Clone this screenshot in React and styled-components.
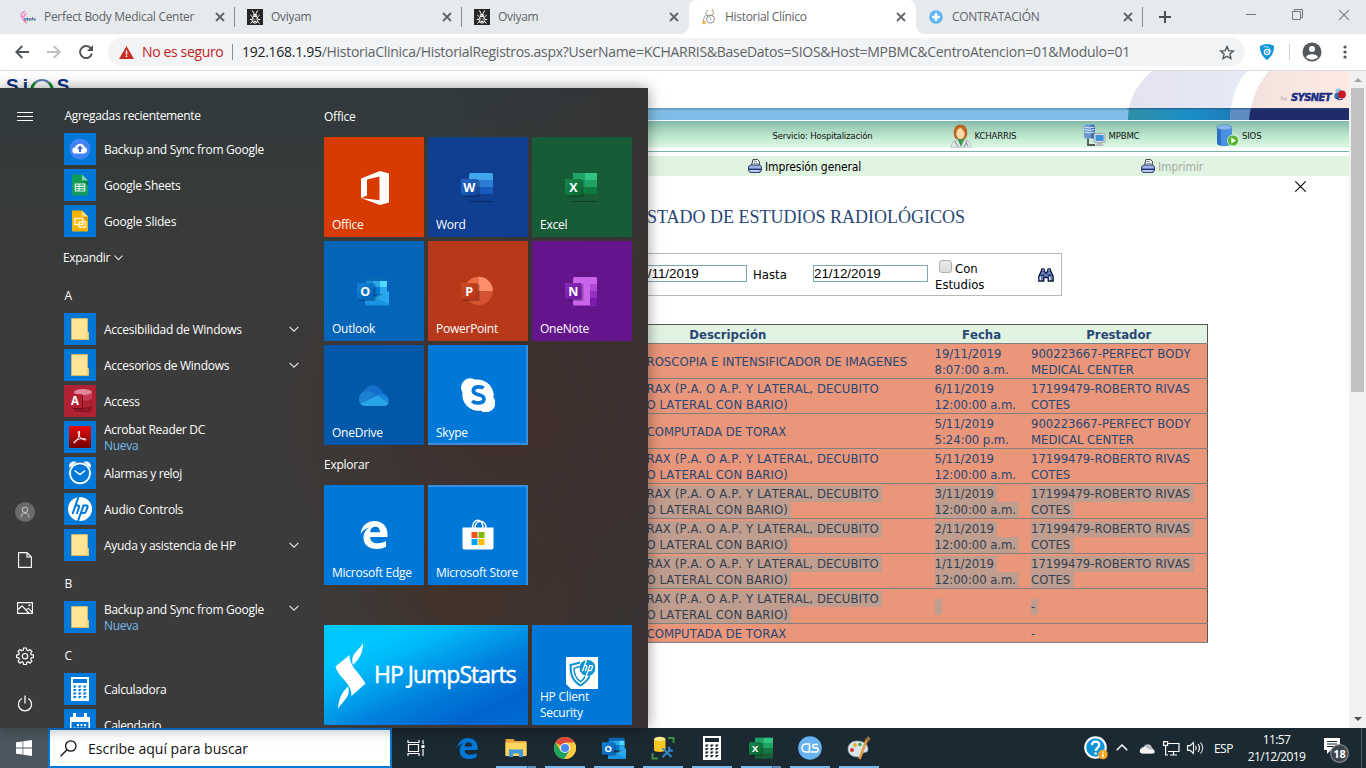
import React from 'react';
import styled, { createGlobalStyle, css } from 'styled-components';

const UI = '"Open Sans", "Noto Sans", sans-serif';
const TAHOMA = '"DejaVu Sans Condensed", "DejaVu Sans", sans-serif';

const GlobalStyle = createGlobalStyle`
  *, *::before, *::after { box-sizing: border-box; }
  body { margin: 0; background: #fff; font-family: ${UI}; }
  svg { display: block; flex: none; }
`;

const Screen = styled.div`
  position: relative;
  display: flex;
  flex-direction: column;
  width: 1366px;
  height: 768px;
  overflow: hidden;
`;

/* ---------- Browser ---------- */

const Browser = styled.div`
  display: flex;
  flex-direction: column;
  height: 728px;
  overflow: hidden;
`;

const TabStrip = styled.div`
  display: flex;
  height: 34px;
  padding-left: 8px;
  background: #e7eaed;
`;

const TabBox = styled.div`
  position: relative;
  display: flex;
  align-items: center;
  width: 227px;
  padding: 0 10px 0 12px;
  font-size: 12px;
  letter-spacing: -0.3px;
  color: #5f6368;
  background: ${(p) => (p.$active ? '#fff' : 'transparent')};
  border-radius: ${(p) => (p.$active ? '8px 8px 0 0' : '0')};
  ${(p) =>
    p.$active &&
    css`
      &::before,
      &::after {
        content: '';
        position: absolute;
        bottom: 0;
        width: 8px;
        height: 8px;
      }
      &::before {
        left: -8px;
        background: radial-gradient(circle at 0 0, transparent 7.5px, #fff 8px);
      }
      &::after {
        right: -8px;
        background: radial-gradient(circle at 100% 0, transparent 7.5px, #fff 8px);
      }
    `}
`;

const TabTitle = styled.span`
  flex: 1;
  margin-left: 8px;
  line-height: 18px;
  white-space: nowrap;
`;

const TabDivider = styled.i`
  width: 1px;
  height: 20px;
  margin-left: 9px;
  margin-right: -10px;
  background: ${(p) => (p.$hidden ? 'transparent' : '#888c90')};
`;

const NewTab = styled.div`
  padding: 11px 0 0 16px;
  flex: 1;
`;

const WindowControls = styled.div`
  display: flex;
  gap: 35px;
  padding: 9px 16px 0 0;
`;

const Toolbar = styled.div`
  display: flex;
  align-items: center;
  height: 37px;
  padding: 0 17px 0 15px;
  border-bottom: 1px solid #d8dadd;
  background: #fff;
`;

const NavButtons = styled.div`
  display: flex;
  align-items: center;
  gap: 18px;
  width: 93px;
`;

const Omnibox = styled.div`
  display: flex;
  align-items: center;
  width: 1137px;
  height: 28px;
  padding: 0 10px 0 11px;
  border-radius: 14px;
  background: #f1f3f4;
  font-size: 14px;
  line-height: 18px;
`;

const NotSecure = styled.span`
  margin-left: 8px;
  width: 90px;
  color: #c5221f;
  letter-spacing: -0.36px;
  white-space: nowrap;
`;

const UrlText = styled.span`
  flex: 1;
  margin-left: 9px;
  color: #5f6368;
  letter-spacing: -0.282px;
  white-space: nowrap;
  b { font-weight: 400; color: #202124; }
`;

const VLine = styled.i`
  width: 1px;
  height: 16px;
  background: ${(p) => p.$color || '#8b8f93'};
`;

const ToolbarActions = styled.div`
  display: flex;
  align-items: center;
  padding-left: 14px;
`;

const Viewport = styled.div`
  display: flex;
  flex: 1;
  min-height: 0;
`;

const Page = styled.div`
  display: flex;
  flex-direction: column;
  width: 1349px;
  overflow: hidden;
  background: #fff;
`;

const Scrollbar = styled.div`
  display: flex;
  flex-direction: column;
  justify-content: space-between;
  align-items: center;
  width: 17px;
  background: #f1f1f1;
`;

const ScrollUp = styled.div`
  display: flex;
  flex-direction: column;
  align-items: center;
  padding-top: 7px;
  gap: 6px;
`;

const Thumb = styled.div`
  width: 13px;
  height: 304px;
  background: #c1c1c1;
`;

const ScrollDown = styled.div`
  padding-bottom: 7px;
`;

/* ---------- Hospital page ---------- */

const Banner = styled.div`
  display: flex;
  justify-content: space-between;
  height: 50px;
  overflow: hidden;
  border-bottom: 1px solid #f4faff;
  background: linear-gradient(#fff 0 37px, #6c9fc4 37px 39px, #7fbde6 39px);
`;

const SiosLogo = styled.div`
  display: flex;
  align-items: flex-start;
  padding: 4px 0 0 6px;
  font: bold 19px/22px "Liberation Sans", sans-serif;
  color: #10307f;
  span { width: 5px; margin-left: 4px; }
`;

const SiosArc = styled.i`
  width: 24px;
  height: 24px;
  margin: 4px 3px 0 2px;
  border: 3px solid #138a36;
  border-top: 2px solid #5c78b8;
  border-radius: 50%;
`;

const BannerArt = styled.div`
  position: relative;
  width: 222px;
`;

const SysnetMark = styled.div`
  position: absolute;
  top: 16px;
  right: 3px;
  display: flex;
  align-items: center;
  font: italic bold 10px/20px "DejaVu Sans", sans-serif;
  color: #1a2f86;
  small { font: 5px/20px "DejaVu Sans", sans-serif; color: #999; margin-right: 3px; }
  svg { margin-left: 3px; margin-top: -6px; }
  span { letter-spacing: -0.6px; -webkit-text-stroke: 0.5px #1a2f86; padding-top: 1px; }
`;

const SessionBar = styled.div`
  display: flex;
  align-items: center;
  height: 31px;
  border-bottom: 1px solid #79b5a6;
  background: linear-gradient(#83b8a9 0, #a9d6c0 9px, #c5ecd3 18px, #dcf7e2 26px, #fff 27px);
  font: 9.5px/14px ${TAHOMA};
  letter-spacing: -0.17px;
  color: #111;
`;

const SessionItem = styled.div`
  display: flex;
  align-items: center;
  flex: none;
  width: ${(p) => p.$w}px;
  margin-left: ${(p) => p.$ml || 0}px;
  padding-bottom: 1px;
  gap: 3px;
  white-space: nowrap;
`;

const PrintBar = styled.div`
  display: flex;
  align-items: center;
  height: 20px;
  margin-top: 4px;
  padding-left: 748px;
  background: #e1f3e1;
  font: 12px/16px ${TAHOMA};
  letter-spacing: -0.1px;
`;

const PrintAction = styled.div`
  display: flex;
  align-items: center;
  flex: none;
  gap: 3px;
  width: 393px;
  color: ${(p) => (p.$disabled ? '#a5aca5' : '#000')};
  span { padding-top: 2px; }
`;

const CloseRow = styled.div`
  display: flex;
  justify-content: flex-end;
  padding: 4px 42px 0 0;
  height: 31px;
`;

const Title = styled.h1`
  margin: 0;
  padding-left: 647px;
  font: 18px/20px "Liberation Serif", serif;
  color: #284775;
  white-space: nowrap;
`;

const FilterBox = styled.div`
  display: flex;
  width: 463px;
  height: 43px;
  margin: 26px 0 0 599px;
  padding-left: 32px;
  border: 1px solid #b9b9b9;
  font: 13px/16px ${TAHOMA};
  color: #000;
`;

const DateInput = styled.input`
  flex: none;
  width: 115px;
  height: 17px;
  margin-top: 11px;
  padding: 0;
  border: 1px solid #7aa9ad;
  border-radius: 0;
  outline: 0;
  font: 13.33px "Liberation Sans", sans-serif;
  color: #000;
`;

const FilterLabel = styled.span`
  flex: none;
  width: 60px;
  margin: 13px 0 0 6px;
`;

const StudiesCheck = styled.label`
  flex: none;
  width: 110px;
  padding: 6px 0 0 7px;
`;

const CheckSquare = styled.i`
  display: inline-block;
  width: 13px;
  height: 13px;
  margin: 0 3px 0 4px;
  vertical-align: 0px;
  border: 1px solid #b0b0b0;
  border-radius: 3px;
  background: linear-gradient(#e9e9e9, #dcdcdc);
`;

const StudyTable = styled.table`
  width: 686px;
  margin: 28px 0 0 522px;
  border-collapse: collapse;
  table-layout: fixed;
  border: 1px solid #555;
  font: 13px/16px ${TAHOMA};
  font-kerning: none;
  color: #284775;
`;

const HeadCell = styled.th`
  width: ${(p) => p.$w}px;
  height: 19px;
  padding: 2px 0 0 ${(p) => p.$pl || 0}px;
  background: #e1f3e1;
  border-bottom: 1px solid #808080;
  font-size: 13px;
`;

const Row = styled.tr`
  height: ${(p) => (p.$short ? 19 : 35)}px;
  background: #e9967a;
  color: ${(p) => (p.$selected ? '#343f50' : '#284775')};
`;

const Cell = styled.td`
  padding: 2px 0 0 ${(p) => p.$pl || 3}px;
  border-bottom: 1px solid #808080;
  letter-spacing: ${(p) => p.$ls || 0}px;
  white-space: nowrap;
`;

const Line = styled.span`
  display: block;
  width: fit-content;
  height: 16px;
  min-width: ${(p) => (p.$selected ? 7 : 0)}px;
  padding-right: ${(p) => p.$tail}px;
  background: ${(p) => (p.$selected ? '#bf9d8f' : 'transparent')};
`;

/* ---------- Start menu ---------- */

const StartMenu = styled.div`
  position: absolute;
  left: 0;
  top: 88px;
  display: flex;
  width: 648px;
  height: 640px;
  overflow: hidden;
  color: #fff;
  font-size: 12px;
  background:
    radial-gradient(ellipse 260px 230px at 500px 330px, rgba(66, 44, 40, 0.75), rgba(66, 44, 40, 0) 100%),
    radial-gradient(ellipse 160px 120px at 460px 510px, rgba(72, 46, 32, 0.6), rgba(72, 46, 32, 0) 100%),
    linear-gradient(100deg, rgba(60, 60, 60, 0) 60%, rgba(56, 46, 46, 0.8) 100%),
    linear-gradient(#30393c 0, #363a39 80px, #3a3b3a 200px, #3b3b3b 640px);
`;

const MenuShadow = styled.div`
  position: absolute;
  left: 0;
  top: 88px;
  width: 648px;
  height: 640px;
  box-shadow: 0 0 14px rgba(0, 0, 0, 0.4);
`;

const Rail = styled.div`
  display: flex;
  flex-direction: column;
  justify-content: space-between;
  width: 48px;
  padding: 24px 0 16px 17px;
`;

const RailGroup = styled.div`
  display: flex;
  flex-direction: column;
  align-items: center;
  gap: 32px;
  width: 20px;
  margin-left: -2px;
`;

const UserBadge = styled.span`
  display: flex;
  align-items: center;
  justify-content: center;
  flex: none;
  width: 20px;
  height: 20px;
  margin-bottom: -2px;
  border-radius: 50%;
  background: #6a6a6a;
`;

const RailIcon = styled.span`
  display: flex;
  align-items: center;
  justify-content: center;
  flex: none;
  width: 18px;
  height: 16px;
`;

const AppList = styled.div`
  display: flex;
  flex-direction: column;
  width: 276px;
  padding: 7px 0 0 16px;
`;

const ListHeader = styled.div`
  display: flex;
  align-items: center;
  gap: 4px;
  flex: none;
  height: 36px;
  margin-left: ${(p) => (p.$expand ? -1 : 0.5)}px;
  padding-top: ${(p) => (p.$expand ? 2 : 6)}px;
  line-height: 16px;
  letter-spacing: -0.32px;
`;

const AppRow = styled.div`
  display: flex;
  align-items: center;
  flex: none;
  height: 36px;
`;

const AppIcon = styled.span`
  display: flex;
  align-items: center;
  justify-content: center;
  width: 32px;
  height: 32px;
  background: ${(p) => p.$bg || '#0078d7'};
`;

const AppName = styled.span`
  display: flex;
  flex-direction: column;
  width: 185px;
  margin-left: 8px;
  padding-top: 2px;
  line-height: 16px;
  letter-spacing: ${(p) => p.$ls || -0.28}px;
  white-space: nowrap;
  small { font-size: 12px; color: #76b9ed; }
`;

const MoreMark = styled.span`
  align-self: ${(p) => (p.$top ? 'flex-start' : 'center')};
  padding-top: ${(p) => (p.$top ? 6 : 0)}px;
`;

const Tiles = styled.div`
  display: flex;
  flex-direction: column;
  width: 308px;
`;

const GroupName = styled.div`
  height: 40px;
  margin-top: ${(p) => (p.$first ? 9 : 0)}px;
  padding-top: 11px;
  line-height: 18px;
  letter-spacing: -0.24px;
`;

const TileGrid = styled.div`
  display: grid;
  grid-template-columns: repeat(3, 100px);
  grid-auto-rows: 100px;
  gap: 4px;
`;

const TileBox = styled.div`
  display: flex;
  flex-direction: column;
  justify-content: space-between;
  align-items: flex-start;
  grid-column: span ${(p) => p.$span || 1};
  padding: ${(p) => p.$pt || 28}px 8px 4px;
  background: ${(p) => p.$bg || '#0078d7'};
  box-shadow: ${(p) => p.$edge || 'none'};
  line-height: 16px;
  letter-spacing: -0.25px;
  > svg { align-self: center; margin-left: ${(p) => p.$shift || 0}px; }
`;

const JumpStarts = styled(TileBox)`
  flex-direction: row;
  align-items: center;
  justify-content: flex-start;
  padding: 4px 0 0 11px;
  font: 24px/30px ${UI};
  background: linear-gradient(155deg, #00c8ff 18%, #00b9f8 32%, #0080dc 60%, #0064cf 82%, #006bd5 100%);
  > svg { margin-top: -2px; }
  span {
    margin: -6px 0 0 7px;
    letter-spacing: -1px;
    transform: scaleX(0.955);
    transform-origin: 0 50%;
    white-space: nowrap;
    -webkit-text-stroke: 0.5px #fff;
  }
`;

/* ---------- Taskbar ---------- */

const TaskbarBox = styled.div`
  display: flex;
  height: 40px;
  background: #1b2932;
  color: #fff;
`;

const StartButton = styled.div`
  display: flex;
  align-items: center;
  justify-content: center;
  flex: none;
  width: 48px;
  background: #4a575e;
`;

const SearchBox = styled.div`
  display: flex;
  align-items: center;
  gap: 11px;
  flex: none;
  width: 344px;
  padding-left: 10px;
  border: 2px solid #0078d7;
  background: #fff;
  color: #111;
  font-size: 14px;
`;

const TaskButtons = styled.div`
  display: flex;
  gap: 1px;
  flex: 1;
`;

const TaskButton = styled.div`
  display: flex;
  flex-direction: column;
  align-items: center;
  flex: none;
  width: 48px;
  height: 40px;
  &:first-child { margin-right: 2px; }
`;

const TaskIcon = styled.div`
  display: flex;
  align-items: center;
  justify-content: center;
  height: 38px;
  padding-top: 2px;
`;

const Underline = styled.div`
  width: 40px;
  height: 2px;
  background: ${(p) =>
    p.$stacked ? 'linear-gradient(90deg, #76b9ed 0 31px, #3d5f7c 31px 32px, #5e8fb8 32px)' : '#76b9ed'};
`;

const Tray = styled.div`
  display: flex;
  align-items: center;
  padding-right: 4px;
  font-size: 12px;
`;

const TrayItem = styled.span`
  margin-left: ${(p) => p.$ml}px;
  margin-top: ${(p) => p.$mt || 0}px;
`;

const Lang = styled.span`
  width: 26px;
  margin-left: 10px;
  letter-spacing: -0.55px;
`;

const Clock = styled.div`
  display: flex;
  flex-direction: column;
  align-items: center;
  width: 73px;
  line-height: 17px;
  letter-spacing: -0.6px;
`;

const ShowDesktop = styled.i`
  width: 1px;
  height: 40px;
  margin-left: 10px;
  background: #4d585f;
`;

/* ---------- Icons ---------- */

const CloseX = ({ size = 10, w = 1.8, color = '#5f6368' }) => (
  <svg width={size} height={size} viewBox="0 0 10 10">
    <path d="M1 1l8 8M9 1l-8 8" stroke={color} strokeWidth={w} />
  </svg>
);

const Chevron = ({ w = 9, up, color = '#e0e0e0', sw = 1.2 }) => (
  <svg width={w} height={w * 0.6} viewBox="0 0 10 6">
    <path d={up ? 'M.6 5.2L5 .8l4.4 4.4' : 'M.6.8L5 5.2 9.4.8'} fill="none" stroke={color} strokeWidth={sw} />
  </svg>
);

const BeetleIcon = () => (
  <svg width="16" height="16" viewBox="0 0 16 16">
    <rect width="16" height="16" fill="#262626" />
    <g fill="none" stroke="#fff" strokeWidth="1">
      <path d="M7 4.500L5.300 1.500M9 4.500L10.700 1.500M5 7.500L3.300 6M11 7.500L12.700 6M4.800 10.500H2.800M11.200 10.500h2M5.200 12.500L3.500 14.500M10.800 12.500l1.700 2" />
      <ellipse cx="8" cy="10.700" rx="3" ry="3.500" />
      <path d="M6.300 5.500h3.400M5.800 7.200h4.400" strokeWidth="1.600" />
      <path d="M6.200 10h1.200M8.700 10h1.200M6.500 12.300h3" strokeWidth="1.200" />
    </g>
  </svg>
);

const BodyIcon = () => (
  <svg width="16" height="16" viewBox="0 0 16 16">
    <path d="M5 2C1.5 4 0 7 2 8c2 .6 3-2 4-4M2 8c1 3 3 5 5 6" fill="none" stroke="#f08cc4" strokeWidth="1.6" />
    <path d="M4 9h11v2.500H4z" fill="#8ea5bf" />
    <path d="M5 9v3M7.500 8.500v3M10 9v3M12.500 8v3M15 9v3" stroke="#54759b" strokeWidth=".9" />
  </svg>
);

const StethoscopeIcon = () => (
  <svg width="16" height="16" viewBox="0 0 16 16" fill="none">
    <path d="M7 1.500C4.500 2 4 5 6 6.500M10.500.8c3 1 2.500 4.700-.5 5.700" stroke="#a08a70" strokeWidth="1.100" strokeDasharray="2 .8" />
    <circle cx="9.500" cy="10.200" r="3.800" stroke="#8f949a" strokeWidth="1.100" />
    <path d="M9 6.500C5 5 2.500 7.500 2.500 12M6 6.500c2 1 4 2 4 5" stroke="#9a9ea3" strokeWidth="1" />
    <circle cx="3" cy="13.500" r="1.700" fill="#f3a63b" />
  </svg>
);

const PlusBadge = () => (
  <svg width="16" height="16" viewBox="0 0 16 16">
    <circle cx="8" cy="8" r="6.800" fill="#63b5f4" />
    <path d="M8 4.200v7.600M4.200 8h7.600" stroke="#fff" strokeWidth="2.600" />
  </svg>
);

const Doctor = () => (
  <svg width="22" height="24" viewBox="0 0 22 24">
    <path d="M1 24c0-5 3-8 6-8h8c4 0 6 3 6 8z" fill="#dfe6ea" stroke="#9aa6ad" strokeWidth=".6" />
    <path d="M7.500 15l3.500 8 3.500-8z" fill="#3a9a4c" />
    <path d="M5 17l3 6M17 17l-3 6M16 19l2 3" stroke="#7b868c" />
    <path d="M5 14C2.500 9 3.500.8 10.500.8S18.500 9 16 14c-1.500 1.600-9.500 1.600-11 0z" fill="#b9601f" />
    <ellipse cx="10.500" cy="9.500" rx="4.200" ry="5.600" fill="#fbd9a8" />
    <path d="M6 9c.5-3 3-4.500 5-5.500 1 2 2.500 3.500 4 5.500 1-4-1.500-6.500-4.500-6.500S5 5 6 9z" fill="#c8742c" />
  </svg>
);

const ServerPc = () => (
  <svg width="23" height="23" viewBox="0 0 23 23">
    <rect x="1" y=".5" width="11" height="14" rx="2" fill="#6f97d4" />
    <path d="M8 .8h2.500q1.500 0 1.500 1.500v10.500q0 1.500-1.500 1.500H8z" fill="#3d6cb8" />
    <path d="M1.500 3q5 2 10 0M1.500 5.500q5 2 10 0M1.500 8q5 2 10 0" stroke="#e4eefc" fill="none" />
    <path d="M5 14.500V21h7" fill="none" stroke="#555" strokeWidth="1.800" />
    <rect x="11" y="9.500" width="11" height="9" rx="1" fill="#d9dde2" stroke="#8a9097" strokeWidth=".7" />
    <rect x="12.600" y="11" width="8" height="6" fill="#3f93de" />
    <path d="M14 19h5l2 3h-9z" fill="#b9bec4" />
  </svg>
);

const Database = () => (
  <svg width="23" height="23" viewBox="0 0 23 23">
    <path d="M1 3v16c0 4 15 4 15 0V3z" fill="#4a90e0" />
    <path d="M1 3v16c0 1.400 1.800 2.300 4 2.800V5z" fill="#2d6fc4" />
    <ellipse cx="8.500" cy="3.300" rx="7.500" ry="2.600" fill="#8ab7ee" stroke="#3d78c0" strokeWidth=".6" />
    <circle cx="17" cy="16.500" r="5.500" fill="#58b32d" stroke="#eafbe0" strokeWidth=".8" />
    <path d="M15.300 13.500v6l4.700-3z" fill="#fff" />
  </svg>
);

const Printer = () => (
  <svg width="14" height="14" viewBox="0 0 14 14">
    <path d="M3.500 6.500L5 .6h4.500L11.500 2.500 11 6.500z" fill="#fff" stroke="#222" strokeWidth=".9" />
    <path d="M5.800 2.600h3M5.400 4.400h4.500" stroke="#5f8a9c" strokeWidth=".9" />
    <path d="M.6 7.500L2.800 6h9l1.600 1.500v4L12 13.400H2L.6 11.700z" fill="#9db5e6" stroke="#16254f" strokeWidth=".9" />
    <path d="M.6 9.600h12.800v1.400H.6z" fill="#1c3377" />
    <path d="M2 12h8.500" stroke="#e3ecff" strokeWidth=".9" />
  </svg>
);

const Binoculars = () => (
  <svg width="16" height="14" viewBox="0 0 16 14">
    <path d="M.8 13V8.500L3.300 3h3.200l.8 2h1.400l.8-2h3.200l2.500 5.500V13h-5V9.500H5.800V13z" fill="#6a80bd" stroke="#0e1838" strokeWidth="1.300" />
    <path d="M3.500 3.500V.8h2.700v2.700M9.800 3.500V.8h2.700v2.700" fill="#8ea0d2" stroke="#0e1838" />
    <path d="M2.300 12.300V8.800M11.800 12.300V8.800" stroke="#e3eaff" strokeWidth="1.300" />
    <path d="M2.500 7.300h3.800M9.700 7.300h3.800" stroke="#0e1838" strokeWidth="1" />
  </svg>
);

const Folder = () => (
  <svg width="18" height="22" viewBox="0 0 18 22">
    <path d="M.5.5h16v13l1 1v7H.5z" fill="#ffe495" stroke="#e3b95a" strokeWidth=".8" />
    <path d="M15.500 16c0-1.600 2-1.600 2 0v5.500h-2z" fill="#fbd06a" />
  </svg>
);

const CloudSync = () => (
  <svg width="22" height="22" viewBox="0 0 22 22">
    <circle cx="11" cy="11" r="10.500" fill="#4384f4" />
    <path d="M6.500 15.500a3 3 0 01-.3-6 5 5 0 019.400-.6 3.400 3.400 0 01-.1 6.600z" fill="#fff" />
    <path d="M11 7.500l3 3.200h-2V14h-2v-3.300H8z" fill="#3366cc" />
  </svg>
);

const DocIcon = ({ color, dark, fold, slides }) => (
  <svg width="18" height="22" viewBox="0 0 18 22">
    <path d="M1.500.5h9.500l6 6v14a1 1 0 01-1 1h-14a1 1 0 01-1-1v-19a1 1 0 01.500-1z" fill={color} />
    <path d="M11 6.500h6v5z" fill={dark} />
    <path d="M11 .5l6 6h-6z" fill={fold} />
    {slides ? (
      <path d="M3.800 8.500h8v6h-8zM8 12h6.500v5H8z" fill={color} stroke="#fff3d0" strokeWidth="1.400" />
    ) : (
      <path d="M4.200 10h9.600v7H4.200zM4.200 12.400h9.600M4.200 14.700h9.600M8 10v7" fill="none" stroke="#e9f5ee" strokeWidth="1.100" />
    )}
  </svg>
);

const Letter = styled.text`
  font: bold ${(p) => p.$size || 12.5}px "Open Sans", sans-serif;
  letter-spacing: 0;
  fill: #fff;
  text-anchor: middle;
`;

const AccessIcon = () => (
  <svg width="32" height="32" viewBox="0 0 32 32">
    <path d="M10 7v18c0 3.500 18 3.500 18 0V7z" fill="#cb3a55" />
    <path d="M10 20v5c0 3.500 18 3.500 18 0v-5c0 3-18 3-18 0z" fill="#8f1524" />
    <path d="M10 13.500v6.500c0 3 18 3 18 0v-6.500c0 3-18 3-18 0z" fill="#ae2032" />
    <ellipse cx="19" cy="7" rx="9" ry="3" fill="#e3879a" />
    <path d="M17 10h2v14H9v-2h8z" fill="#6c0d19" />
    <rect x="4.500" y="9" width="13.500" height="14" fill="#b51f33" />
    <Letter x="11" y="20" $size={11.500}>A</Letter>
  </svg>
);

const AcrobatIcon = () => (
  <svg width="22" height="22" viewBox="0 0 22 22">
    <defs>
      <linearGradient id="acro" x2="0" y2="1"><stop stopColor="#e80c0c" /><stop offset="1" stopColor="#700000" /></linearGradient>
    </defs>
    <rect width="22" height="22" rx="1" fill="url(#acro)" />
    <path d="M5 16.800c-.8-1 2.500-3.200 5.500-3.800s6.500-.7 6.500.5-3.800 0-6-2.200-2.300-6-1.200-6.300 1.200 3.300-.5 6.500-3.600 6.200-4.300 5.300z" fill="none" stroke="#fff" strokeWidth="1" />
  </svg>
);

const AlarmIcon = () => (
  <svg width="24" height="26" viewBox="0 0 24 26">
    <path d="M1.200 8C.2 3 4 .5 8.500 2zM22.800 8c1-5-2.800-7.500-7.300-6z" fill="#fff" />
    <circle cx="12" cy="13.300" r="10" fill="#0078d7" stroke="#fff" strokeWidth="1.800" />
    <path d="M6.500 10.500l5.500 4 5-4" fill="none" stroke="#fff" strokeWidth="1.500" />
  </svg>
);

const HpIcon = ({ size = 24, bg = '#fff', fg = '#0078d7' }) => (
  <svg width={size} height={size} viewBox="0 0 24 24">
    <circle cx="12" cy="12" r="12" fill={bg} />
    <path
      d="M10.500 0L4.500 17M7.300 8.500h2.700q1.600 0 1 1.700L8.700 17M18.500 8.500h-3L10 24M18.500 8.500q1.600 0 1 1.700L18 14.500q-.5 1.500-2 1.500h-2.700"
      fill="none" stroke={fg} strokeWidth="2"
    />
  </svg>
);

const CalcIcon = ({ size = 24, fg = '#fff', bg = '#0078d7' }) => (
  <svg width={size * 0.75} height={size} viewBox="0 0 18 24">
    <path d="M0 0h18v24H0z" fill={fg} />
    <path d="M2 2h14v4H2z" fill={bg} />
    <g fill={bg}>
      {[8.5, 12, 15.5, 19].map((y) => [2.5, 7.5, 12.5].map((x) => <path key={`${x}-${y}`} d={`M${x} ${y}h3v1h-1v1.300h-2z`} />))}
    </g>
  </svg>
);

const CalendarIcon = () => (
  <svg width="20" height="24" viewBox="0 0 20 24">
    <path d="M0 4h3V0h3v4h8V0h3v4h3v20H0z" fill="#fff" />
    <path d="M1.500 9h17v14h-17z" fill="#0078d7" />
    <path d="M7 11h2v2H7zM10.500 11h2v2h-2zM14 11h2v2h-2zM3.500 14.500h2v2h-2zM7 14.500h2v2H7zM10.500 14.500h2v2h-2zM14 14.500h2v2h-2z" fill="#fff" />
  </svg>
);

const OfficeIcon = () => (
  <svg width="28" height="34" viewBox="0 0 28 34">
    <path d="M0 7.500L19 0l9 2.500v29L19 34 0 27l18.500 2.300V5.500L6 8.500v16L0 27z" fill="#fff" />
  </svg>
);

const Badge = ({ letter, from, to }) => (
  <g>
    <defs>
      <linearGradient id={`bdg${letter}`} x2="1" y2="1"><stop stopColor={from} /><stop offset="1" stopColor={to} /></linearGradient>
    </defs>
    <rect x="1.500" y="8" width="17" height="17" rx="1" fill="#000" opacity=".25" />
    <rect x="0" y="7" width="16.500" height="16.500" rx="1.300" fill={`url(#bdg${letter})`} />
    <Letter x="8.300" y="19.700">{letter}</Letter>
  </g>
);

const WordIcon = () => (
  <svg width="32" height="30" viewBox="0 0 32 30">
    <rect x="8" y="1" width="24" height="28.500" rx="1.500" fill="#103f91" />
    <path d="M8 8V2.500A1.500 1.500 0 019.500 1h21A1.500 1.500 0 0132 2.500V8z" fill="#41a5ee" />
    <path d="M8 8h24v7H8z" fill="#2b7cd3" /><path d="M8 15h24v7H8z" fill="#185abd" />
    <path d="M8 29.500h24" stroke="#0a2a66" />
    <Badge letter="W" from="#2368c4" to="#1148a5" />
  </svg>
);

const ExcelIcon = ({ size = 32 }) => (
  <svg width={size} height={size * 0.9375} viewBox="0 0 32 30">
    <rect x="8" y="1" width="24" height="28.500" rx="1.500" fill="#185c37" />
    <path d="M8 1h12v7H8z" fill="#21a366" /><path d="M20 1h12v7H20z" fill="#33c481" />
    <path d="M8 8h12v7H8z" fill="#21a366" opacity=".8" /><path d="M20 8h12v7H20z" fill="#21a366" />
    <path d="M8 15h12v7H8z" fill="#107c41" /><path d="M20 15h12v7H20z" fill="#107c41" opacity=".9" />
    <path d="M8 29.500h24" stroke="#0d3b22" />
    <Badge letter="X" from="#18884f" to="#0b6631" />
  </svg>
);

const OutlookIcon = ({ size = 32 }) => (
  <svg width={size} height={size * 0.9375} viewBox="0 0 32 30">
    <path d="M9 2.500A1.500 1.500 0 0110.500 1h18A1.500 1.500 0 0130 2.500V16H9z" fill="#0a68b4" />
    <path d="M9 5h7v6H9z" fill="#1490df" /><path d="M16 5h7v6h-7z" fill="#28a8ea" /><path d="M23 5h7v6h-7z" fill="#50d9ff" />
    <path d="M9 11h7v7H9z" fill="#0364b8" /><path d="M16 11h7v7h-7z" fill="#0078d4" /><path d="M23 11h7v7h-7z" fill="#28a8ea" />
    <path d="M8 15l12 7 12-7v13a1.500 1.500 0 01-1.500 1.500h-21A1.500 1.500 0 018 28z" fill="#1a93e2" />
    <path d="M32 15v13l-14-7z" fill="#35b8f1" opacity=".55" />
    <Badge letter="O" from="#1784d9" to="#0160b5" />
  </svg>
);

const PowerPointIcon = () => (
  <svg width="32" height="30" viewBox="0 0 32 30">
    <circle cx="17.700" cy="15" r="14.200" fill="#d35230" />
    <path d="M17.700.8A14.200 14.200 0 003.500 15h14.200z" fill="#ed6c47" />
    <path d="M17.700.8A14.200 14.200 0 0131.900 15H17.700z" fill="#ff8f6b" />
    <Badge letter="P" from="#ca4c28" to="#b72e12" />
  </svg>
);

const OneNoteIcon = () => (
  <svg width="32" height="30" viewBox="0 0 32 30">
    <rect x="8" y="1" width="24" height="28.500" rx="1.500" fill="#ca64ea" />
    <path d="M25 8h7v7h-7z" fill="#ae4bd5" /><path d="M25 15h7v7h-7z" fill="#9332bf" /><path d="M25 22h7v7.500h-7z" fill="#7719aa" />
    <Badge letter="N" from="#8a2bbd" to="#6b1499" />
  </svg>
);

const OneDriveIcon = () => (
  <svg width="32" height="22" viewBox="0 0 32 22">
    <path d="M5 8C7 1 13-.5 17 .5c5 1 8 5 8 9L15 14z" fill="#1270c8" />
    <path d="M6 20.500a6 6 0 01-5-6C1 9 5 5.500 10 6.500c4 0 6 3 10 5L8 20.500z" fill="#1c80d3" />
    <path d="M19 11c1-2.500 6-3.500 9-.5 3 2.500 4 6 1 9.500l-6-2z" fill="#1686da" />
    <path d="M2.500 18.500L20 10.500l10.500 8c-1 2-3 2.500-5 2.500H7c-2 0-3.500-.8-4.500-2.500z" fill="#28a4ea" />
  </svg>
);

const SkypeIcon = () => (
  <svg width="34" height="34" viewBox="0 0 34 34">
    <path d="M9.500.3a9.300 9.300 0 015 1.500A15.800 15.800 0 0132.500 19.500 9.300 9.300 0 0119.500 32.500 15.800 15.800 0 011.500 14.500 9.300 9.300 0 019.500.3z" fill="#fff" />
    <path
      d="M22.500 10.200C20.500 8.300 12.400 7.800 12.300 12.800c0 5.200 10.700 2.800 10.700 8 0 5.300-9 5-11.800 2.200"
      fill="none" stroke="#0078d7" strokeWidth="3.700"
    />
  </svg>
);

const EdgeIcon = ({ size = 28, color = '#fff' }) => (
  <svg width={size} height={size} viewBox="0 0 28 28">
    <path
      d="M.5 13C1.500 5 7 0 14.500 0 22.500 0 27.500 5.500 27.500 13v3H10c.3 4.500 3.500 6.300 8 6.300 3.200 0 5.800-.9 8-2.200v5.700c-2.600 1.400-5.500 2.200-9 2.200C8.600 28 3.500 24 3.500 16.500c0-4 2-7.700 5.500-10C5.500 7.500 2.500 9.500.500 13zM10.200 11.200h9.800c0-3.500-1.500-5.500-4.800-5.500-3 0-4.700 2.300-5 5.500z"
      fill={color}
    />
  </svg>
);

const StoreIcon = () => (
  <svg width="32" height="31" viewBox="0 0 32 31">
    <path d="M10.500 9C10.500-1.500 21-1.500 21 9M13 9c0-9 11-9 11 0" fill="none" stroke="#fff" strokeWidth="1.500" />
    <path d="M.5 8.500h31v20.500a2 2 0 01-2 1.500h-27a2 2 0 01-2-1.500z" fill="#fff" />
    <path d="M9.500 13h6v6h-6z" fill="#f25022" /><path d="M16.500 13h6v6h-6z" fill="#7fba00" />
    <path d="M9.500 20h6v6h-6z" fill="#00a4ef" /><path d="M16.500 20h6v6h-6z" fill="#ffb900" />
  </svg>
);

const JumpIcon = () => (
  <svg width="32" height="66" viewBox="0 0 32 66" fill="#fff">
    <path d="M28 0C28 9 25 15.500 18 22c-1.500-5-.5-9 2-12C22 7.500 26 4 28 0z" />
    <path d="M.5 23.500L14.500 12c0 6 2.500 10.500 6.500 15.500 4 5 7 8.500 9.500 13L16.500 53c0-5.500-2-9.500-6-14.500S2.500 30.500.5 23.500z" />
    <path d="M3 66C3.500 57 6 50 13 43.500c1.500 5 .5 9-2 12C9 58.500 5 62 3 66z" />
  </svg>
);

const SecurityIcon = () => (
  <svg width="32" height="32" viewBox="0 0 32 32">
    <path d="M0 0h32v32H5l-5-5z" fill="#fff" />
    <path d="M14 5.500L4.500 8c0 9 1.500 15.500 10 20.500C20 25 22.500 22 23.500 19" fill="none" stroke="#0e93d0" strokeWidth="2" />
    <path d="M14 9.500l-6 1.700c0 6 1.500 10 6.500 13.500 2-1.500 3.500-3 4.500-5" fill="none" stroke="#0e93d0" strokeWidth="1.500" />
    <g transform="translate(13.500 3)"><HpIcon size={16} bg="#0e93d0" fg="#fff" /></g>
  </svg>
);

const Gear = () => (
  <svg width="18" height="18" viewBox="0 0 18 18" fill="none" stroke="#fff" strokeWidth="1.200">
    <path d="M7.600 1h2.800l.4 2.200 1.300.6 1.900-1.300 1.900 1.900-1.200 1.900.5 1.300 2.200.4v2.500l-2.200.4-.5 1.400 1.200 1.900-1.900 1.900-1.900-1.300-1.300.6-.4 2.200H7.600l-.4-2.200-1.300-.6L4 16.100l-1.900-1.900 1.200-1.900-.5-1.400L.6 10.500V8l2.200-.4.5-1.300L2.100 4.400 4 2.500l1.900 1.300 1.300-.6z" />
    <circle cx="9" cy="9.200" r="2.700" />
  </svg>
);

const Power = () => (
  <svg width="16" height="18" viewBox="0 0 16 18" fill="none" stroke="#fff" strokeWidth="1.300">
    <path d="M8 .5v8M4.800 3.500a6.600 6.600 0 106.400 0" />
  </svg>
);

const ExplorerIcon = () => (
  <svg width="22" height="20" viewBox="0 0 22 20">
    <path d="M.5 1h8l1.500 2h11.500v14H.5z" fill="#e8a33d" />
    <path d="M.5 4.500h21V18H.5z" fill="#ffd75e" />
    <path d="M4 19v-7.500h14V19h-4v-3.500H8V19z" fill="#3f97dd" />
  </svg>
);

const ChromeIcon = () => (
  <svg width="22" height="22" viewBox="0 0 22 22">
    <circle cx="11" cy="11" r="11" fill="#fbc02d" />
    <path d="M11 11L1.500 5.500A11 11 0 0120.500 5.500z" fill="#dd4b3e" />
    <path d="M1.500 5.500a11 11 0 009 16.500l5-8.500L6.500 14z" fill="#1da362" />
    <path d="M20.500 5.500H11l4.800 8-5.300 8.500A11 11 0 0020.500 5.500z" fill="#ffcd42" />
    <circle cx="11" cy="11" r="5" fill="#f4f4f4" /><circle cx="11" cy="11" r="4" fill="#4a8af4" />
  </svg>
);

const SqlIcon = () => (
  <svg width="24" height="24" viewBox="0 0 24 24">
    <path d="M3 3v11c0 2.500 11.500 2.500 11.500 0V3z" fill="#f8c820" />
    <ellipse cx="8.750" cy="3" rx="5.750" ry="2.200" fill="#ffe98a" />
    <path d="M17 2h5.500v5M1.500 17v5.500h5.500" fill="none" stroke="#3d9140" strokeWidth="2" />
    <path d="M11.500 21l8.500-8M13 13.500l7.500 7.500" stroke="#3588c9" strokeWidth="1.900" />
    <path d="M18.500 10.800a2.500 2.500 0 003.500 3.500M11 12.500l3.500 1.500" fill="none" stroke="#3588c9" strokeWidth="1.900" />
  </svg>
);

const AsIcon = () => (
  <svg width="24" height="24" viewBox="0 0 24 24">
    <circle cx="12" cy="12" r="11.800" fill="#67b3f2" />
    <path d="M11.500 8v8H8a4 4 0 010-8h3.500zM20 8.500h-3.500a1.700 1.700 0 000 3.400H18a2 2 0 010 4.100h-5" fill="none" stroke="#fff" strokeWidth="1.600" />
  </svg>
);

const PaintIcon = () => (
  <svg width="24" height="24" viewBox="0 0 24 24">
    <path d="M10 5c6 0 11 3 11 8 0 4-3 3-5 4s-1 4-5 4C5 21 1 18 1 13s4-8 9-8z" fill="#d9e6ee" stroke="#8da3b2" strokeWidth=".6" />
    <circle cx="5" cy="14" r="2" fill="#d33a2c" /><circle cx="8" cy="9" r="1.900" fill="#f0a62c" /><circle cx="13" cy="8.500" r="1.800" fill="#3da649" />
    <path d="M20 3L12.500 23" stroke="#e59a3c" strokeWidth="2.600" /><path d="M18.500 4L21 0l2.500 3-3 3.500z" fill="#a9743f" />
  </svg>
);

const Onedrive = () => (
  <svg width="16" height="11" viewBox="0 0 16 11">
    <path d="M4.500 10.500h8a3 3 0 00.5-5.800A4.500 4.500 0 004.500 4 3.300 3.300 0 001 7.500c0 2 1.500 3 3.500 3z" fill="#b8bcbf" />
    <path d="M3 10.500c-3-.5-3-4 0-4.500 2-3 5-2 6 0l6 1c1.500 1.500.5 3.500-1 3.500z" fill="#f3f3f3" />
  </svg>
);

/* ---------- Data ---------- */

const TABS = [
  { title: 'Perfect Body Medical Center', icon: <BodyIcon /> },
  { title: 'Oviyam', icon: <BeetleIcon /> },
  { title: 'Oviyam', icon: <BeetleIcon />, noDivider: true },
  { title: 'Historial Clínico', icon: <StethoscopeIcon />, active: true, noDivider: true },
  { title: 'CONTRATACIÓN', icon: <PlusBadge /> },
];

const CHEST = ['RAX (P.A. O A.P. Y LATERAL, DECUBITO', 'O LATERAL CON BARIO)'];
const CLINIC = ['900223667-PERFECT BODY', 'MEDICAL CENTER'];
const RIVAS = ['17199479-ROBERTO RIVAS', 'COTES'];

const STUDIES = [
  { text: ['ROSCOPIA E INTENSIFICADOR DE IMAGENES'], date: ['19/11/2019', '8:07:00 a.m.'], by: CLINIC },
  { text: CHEST, date: ['6/11/2019', '12:00:00 a.m.'], by: RIVAS },
  { text: ['COMPUTADA DE TORAX'], date: ['5/11/2019', '5:24:00 p.m.'], by: CLINIC },
  { text: CHEST, date: ['5/11/2019', '12:00:00 a.m.'], by: RIVAS },
  { text: CHEST, date: ['3/11/2019', '12:00:00 a.m.'], by: RIVAS, selected: true },
  { text: CHEST, date: ['2/11/2019', '12:00:00 a.m.'], by: RIVAS, selected: true },
  { text: CHEST, date: ['1/11/2019', '12:00:00 a.m.'], by: RIVAS, selected: true },
  { text: CHEST, date: [''], by: ['-'], selected: true },
  { text: ['COMPUTADA DE TORAX'], date: [], by: ['-'], short: true },
];

const APPS = [
  { header: 'Agregadas recientemente' },
  { name: 'Backup and Sync from Google', icon: <CloudSync /> },
  { name: 'Google Sheets', icon: <DocIcon color="#109d58" dark="#0b7d45" fold="#87ceac" /> },
  { name: 'Google Slides', icon: <DocIcon color="#f4b400" dark="#d89b00" fold="#fada80" slides />, ls: -0.22 },
  { header: 'Expandir', expand: true },
  { header: 'A' },
  { name: 'Accesibilidad de Windows', icon: <Folder />, more: true, ls: -0.25 },
  { name: 'Accesorios de Windows', icon: <Folder />, more: true },
  { name: 'Access', icon: <AccessIcon />, bg: '#ae2234' },
  { name: 'Acrobat Reader DC', icon: <AcrobatIcon />, fresh: true, ls: -0.3 },
  { name: 'Alarmas y reloj', icon: <AlarmIcon />, ls: -0.33 },
  { name: 'Audio Controls', icon: <HpIcon /> },
  { name: 'Ayuda y asistencia de HP', icon: <Folder />, more: true },
  { header: 'B' },
  { name: 'Backup and Sync from Google', icon: <Folder />, more: true, fresh: true },
  { header: 'C' },
  { name: 'Calculadora', icon: <CalcIcon />, ls: -0.35 },
  { name: 'Calendario', icon: <CalendarIcon />, ls: -0.35 },
];

const TASKS = [
  {
    icon: (
      <svg width="18" height="16" viewBox="0 0 18 16" fill="none" stroke="#fff" strokeWidth="1.200">
        <path d="M1.500 4.500h10v7h-10zM1 0v2.500h11V0M1 16v-2.500h11V16M16 0v4M16 9v7" /><path d="M14.500 5h3v3h-3z" fill="#fff" stroke="none" />
      </svg>
    ),
  },
  { icon: <EdgeIcon size={21} color="#0078d7" /> },
  { icon: <ExplorerIcon />, open: true, stacked: true },
  { icon: <ChromeIcon />, open: true },
  { icon: <OutlookIcon size={24} />, open: true },
  { icon: <SqlIcon />, open: true },
  { icon: <CalcIcon bg="#1b2932" />, open: true },
  { icon: <ExcelIcon size={24} />, open: true, stacked: true },
  { icon: <AsIcon />, open: true },
  { icon: <PaintIcon />, open: true },
];

/* ---------- Sections ---------- */

function BrowserChrome() {
  return (
    <>
      <TabStrip>
        {TABS.map((t, i) => (
          <TabBox key={i} $active={t.active}>
            {t.icon}
            <TabTitle>{t.title}</TabTitle>
            <CloseX />
            <TabDivider $hidden={t.noDivider} />
          </TabBox>
        ))}
        <NewTab>
          <svg width="12" height="12" viewBox="0 0 12 12"><path d="M6 0v12M0 6h12" stroke="#4b4f54" strokeWidth="2" /></svg>
        </NewTab>
        <WindowControls>
          <svg width="11" height="11" viewBox="0 0 11 11"><path d="M0 5.500h10" stroke="#777" /></svg>
          <svg width="11" height="11" viewBox="0 0 11 11" fill="none" stroke="#777"><path d="M.5 2.500h8v8h-8zM2.500 2.500v-2h8v8h-2" /></svg>
          <CloseX size={12} w={0.9} color="#777" />
        </WindowControls>
      </TabStrip>
      <Toolbar>
        <NavButtons>
          <svg width="14" height="14" viewBox="0 0 14 14" fill="none" stroke="#505458" strokeWidth="1.800"><path d="M14 7H1.500M7.300 1L1.300 7l6 6" /></svg>
          <svg width="14" height="14" viewBox="0 0 14 14" fill="none" stroke="#bcbec1" strokeWidth="1.800"><path d="M0 7h12.500M6.700 1l6 6-6 6" /></svg>
          <svg width="14" height="14" viewBox="0 0 14 14" fill="none" stroke="#505458" strokeWidth="1.900"><path d="M12 3.600A6 6 0 1012.900 8.500" /><path d="M14 0v6H8z" fill="#505458" stroke="none" /></svg>
        </NavButtons>
        <Omnibox>
          <svg width="15" height="13" viewBox="0 0 15 13"><path d="M7.500 0L15 13H0z" fill="#c93025" /><path d="M7.500 4.500v4M7.500 9.500v1.600" stroke="#fff" strokeWidth="1.500" /></svg>
          <NotSecure>No es seguro</NotSecure>
          <VLine />
          <UrlText><b>192.168.1.95</b>/HistoriaClinica/HistorialRegistros.aspx?UserName=KCHARRIS&amp;BaseDatos=SIOS&amp;Host=MPBMC&amp;CentroAtencion=01&amp;Modulo=01</UrlText>
          <svg width="16" height="15" viewBox="0 0 16 15"><path d="M8 1.600l1.800 4.100 4.500.4-3.400 3 1 4.400L8 11.200l-3.900 2.300 1-4.400-3.400-3 4.500-.4z" fill="none" stroke="#505458" strokeWidth="1.400" /></svg>
        </Omnibox>
        <ToolbarActions>
          <svg width="16" height="16" viewBox="0 0 16 16"><path d="M1 2q7-4 14 0c.5 6-3 11-7 14C4 13 .5 8 1 2z" fill="#1296db" /><path d="M4.500 3Q10 1 12 8" fill="none" stroke="#bfe4f8" /><circle cx="8" cy="8" r="2.600" fill="none" stroke="#fff" strokeWidth="1.200" /><path d="M6.500 8h3" stroke="#fff" /></svg>
          <TrayItem $ml={14}><VLine $color="#cfd1d4" as="div" /></TrayItem>
          <TrayItem $ml={12}><svg width="20" height="20" viewBox="0 0 20 20"><circle cx="10" cy="10" r="9.500" fill="#55595e" /><circle cx="10" cy="7" r="3" fill="#fff" /><path d="M4 15.200c1-4 11-4 12 0-3 3.300-9 3.300-12 0z" fill="#fff" /></svg></TrayItem>
          <TrayItem $ml={21}><svg width="4" height="14" viewBox="0 0 4 14" fill="#505458"><circle cx="2" cy="2" r="1.600" /><circle cx="2" cy="7" r="1.600" /><circle cx="2" cy="12" r="1.600" /></svg></TrayItem>
        </ToolbarActions>
      </Toolbar>
    </>
  );
}

function PageBanner() {
  return (
    <Banner>
      <SiosLogo>S<span>i</span><SiosArc />S</SiosLogo>
      <BannerArt>
        <svg width="222" height="49" viewBox="0 0 222 49">
          <defs>
            <linearGradient id="lil"><stop stopColor="#e4e2ee" /><stop offset="1" stopColor="#e6ebf6" /></linearGradient>
            <linearGradient id="pch"><stop stopColor="#f3e3de" /><stop offset="1" stopColor="#fdeae2" /></linearGradient>
            <linearGradient id="teal"><stop stopColor="#2f8fa8" /><stop offset=".6" stopColor="#1b8fc6" /><stop offset="1" stopColor="#1f7db8" /></linearGradient>
          </defs>
          <path d="M2 37Q7 15 25 0h95q-13 15-16 37z" fill="url(#lil)" />
          <path d="M124 37Q128 15 142 0h80v37z" fill="url(#pch)" />
          <path d="M1 49q0-6 1-12h102q-1 6-1 12z" fill="url(#teal)" />
          <path d="M103 49q0-6 1-12h20q-2 6-2 12z" fill="#5f8cc0" />
          <path d="M122 49q0-6 2-12h98v12z" fill="#1f2b69" />
          <path d="M0 37.800h222" stroke="#2a4c78" strokeWidth="1.500" opacity=".5" />
        </svg>
        <SysnetMark>
          <small>by:</small><span>SYSNET</span>
          <svg width="12" height="13" viewBox="0 0 12 13"><circle cx="4.500" cy="3.500" r="3" fill="#8fc3e4" /><circle cx="3.500" cy="8" r="3.200" fill="#2f6fb0" /><circle cx="8" cy="6.500" r="3.900" fill="#c81626" /><path d="M2 10q3 3.500 7 1" stroke="#1b3c7c" fill="none" /></svg>
        </SysnetMark>
      </BannerArt>
    </Banner>
  );
}

function HospitalPage() {
  return (
    <Page>
      <PageBanner />
      <SessionBar>
        <SessionItem $w={177} $ml={772.5}>Servicio: Hospitalización</SessionItem>
        <SessionItem $w={133}><Doctor />KCHARRIS</SessionItem>
        <SessionItem $w={133.500}><ServerPc />MPBMC</SessionItem>
        <SessionItem $w={60}><Database />SIOS</SessionItem>
      </SessionBar>
      <PrintBar>
        <PrintAction><Printer /><span>Impresión general</span></PrintAction>
        <PrintAction $disabled><Printer /><span>Imprimir</span></PrintAction>
      </PrintBar>
      <CloseRow><CloseX size={13} w={0.85} color="#000" /></CloseRow>
      <Title>STADO DE ESTUDIOS RADIOLÓGICOS</Title>
      <FilterBox>
        <DateInput defaultValue="01/11/2019" />
        <FilterLabel>Hasta</FilterLabel>
        <DateInput defaultValue="21/12/2019" />
        <StudiesCheck><CheckSquare />Con<br />Estudios</StudiesCheck>
        <TrayItem $ml={0} $mt={14}><Binoculars /></TrayItem>
      </FilterBox>
      <StudyTable>
        <thead>
          <tr>
            <HeadCell $w={408} $pl={2}>Descripción</HeadCell>
            <HeadCell $w={97} $pl={5}>Fecha</HeadCell>
            <HeadCell $w={180} $pl={3}>Prestador</HeadCell>
          </tr>
        </thead>
        <tbody>
          {STUDIES.map((s, i) => (
            <Row key={i} $short={s.short} $selected={s.selected}>
              {[[s.text, 123.5, s.text.length > 1 ? 0.1 : 0.02, 3], [s.date, 4, -0.06, 3], [s.by, 3.5, -0.03, 4]].map(([lines, pl, ls, tail], c) => (
                <Cell key={c} $pl={pl} $ls={ls}>
                  {lines.map((l, n) => <Line key={n} $selected={s.selected} $tail={l.length > 1 ? tail : 0}>{l}</Line>)}
                </Cell>
              ))}
            </Row>
          ))}
        </tbody>
      </StudyTable>
    </Page>
  );
}

function Start() {
  return (
    <>
      <MenuShadow />
      <StartMenu>
        <Rail>
          <svg width="16" height="10" viewBox="0 0 16 10"><path d="M0 .5h16M0 4.500h16M0 8.500h16" stroke="#fff" /></svg>
          <RailGroup>
            <UserBadge><svg width="10" height="12" viewBox="0 0 10 12" fill="none" stroke="#ccc" strokeWidth="1"><circle cx="5" cy="3.800" r="2.700" /><path d="M1 11.500C1 5.500 9 5.500 9 11.500" /></svg></UserBadge>
            <RailIcon><svg width="14" height="16" viewBox="0 0 14 16" fill="none" stroke="#fff" strokeWidth="1.100"><path d="M.6.6h8.400l4.400 4.400v10.400H.6zM9 .6V5h4.400" /></svg></RailIcon>
            <RailIcon><svg width="16" height="12" viewBox="0 0 16 12" fill="none" stroke="#fff" strokeWidth="1.100"><path d="M.6.6h14.800v10.800H.6zM.6 8L5 3.800l6.800 7.200M9 8.200l2.200-2 4 4" /><circle cx="12.500" cy="3.300" r=".5" /></svg></RailIcon>
            <RailIcon><Gear /></RailIcon>
            <RailIcon><Power /></RailIcon>
          </RailGroup>
        </Rail>
        <AppList>
          {APPS.map((a, i) =>
            a.header ? (
              <ListHeader key={i} $expand={a.expand}>
                {a.header}
                {a.expand && <Chevron />}
              </ListHeader>
            ) : (
              <AppRow key={i}>
                <AppIcon $bg={a.bg}>{a.icon}</AppIcon>
                <AppName $ls={a.ls}>{a.name}{a.fresh && <small>Nueva</small>}</AppName>
                {a.more && <MoreMark $top={a.fresh}><Chevron w={10} /></MoreMark>}
              </AppRow>
            )
          )}
        </AppList>
        <Tiles>
          <GroupName $first>Office</GroupName>
          <TileGrid>
            <TileBox $bg="#d83b01" $pt={34} $shift={2}><OfficeIcon />Office</TileBox>
            <TileBox $bg="#103f91" $pt={35} $shift={-2}><WordIcon />Word</TileBox>
            <TileBox $bg="#185c37" $pt={35} $shift={-2}><ExcelIcon />Excel</TileBox>
            <TileBox $bg="#0364b8" $pt={35} $shift={-2}><OutlookIcon />Outlook</TileBox>
            <TileBox $bg="#b7391a" $pt={35} $shift={-2}><PowerPointIcon />PowerPoint</TileBox>
            <TileBox $bg="#64158c" $pt={35} $shift={-2}><OneNoteIcon />OneNote</TileBox>
            <TileBox $bg="#0258a8" $pt={40}><OneDriveIcon />OneDrive</TileBox>
            <TileBox $pt={33} $edge="inset -2px -2px 0 #3390e0"><SkypeIcon />Skype</TileBox>
          </TileGrid>
          <GroupName>Explorar</GroupName>
          <TileGrid>
            <TileBox $pt={36}><EdgeIcon />Microsoft Edge</TileBox>
            <TileBox $pt={34} $edge="inset -2px 2px 0 #3390e0"><StoreIcon />Microsoft Store</TileBox>
          </TileGrid>
          <GroupName />
          <TileGrid>
            <JumpStarts $span={2}><JumpIcon /><span>HP JumpStarts</span></JumpStarts>
            <TileBox $pt={32}><SecurityIcon />HP Client Security</TileBox>
          </TileGrid>
        </Tiles>
      </StartMenu>
    </>
  );
}

function Taskbar() {
  return (
    <TaskbarBox>
      <StartButton>
        <svg width="16" height="16" viewBox="0 0 16 16" fill="#fff"><path d="M0 2.300l6.600-.9v6.200H0zM7.300 1.300L16 0v7.600H7.300zM0 8.400h6.600v6.200L0 13.700zM7.300 8.400H16V16l-8.700-1.300z" /></svg>
      </StartButton>
      <SearchBox>
        <svg width="17" height="17" viewBox="0 0 17 17" fill="none" stroke="#111" strokeWidth="1.300"><circle cx="10.800" cy="6" r="5.200" /><path d="M7 9.800L.6 16.300" /></svg>
        Escribe aquí para buscar
      </SearchBox>
      <TaskButtons>
        {TASKS.map((t, i) => (
          <TaskButton key={i}>
            <TaskIcon>{t.icon}</TaskIcon>
            {t.open && <Underline $stacked={t.stacked} />}
          </TaskButton>
        ))}
      </TaskButtons>
      <Tray>
        <svg width="24" height="24" viewBox="0 0 24 24"><circle cx="11.500" cy="11.500" r="10.300" fill="#1193d8" stroke="#fff" strokeWidth="2" /><path d="M8 9c0-4.500 7.200-4.500 7.200 0 0 2.800-3.600 2.800-3.600 6M11.600 16.500v2" fill="none" stroke="#fff" strokeWidth="2.300" /><circle cx="19" cy="18.500" r="4.800" fill="#f5a623" /><path d="M19 15.500v1.300M19 17.700v3.500" stroke="#fff" strokeWidth="1.400" /></svg>
        <TrayItem $ml={8}><Chevron w={12} up color="#fff" /></TrayItem>
        <TrayItem $ml={11}><Onedrive /></TrayItem>
        <TrayItem $ml={8}><svg width="17" height="15" viewBox="0 0 17 15" fill="none" stroke="#fff" strokeWidth="1.200"><path d="M5 2.500h11v8H5M10.500 10.500V14M7 14h7M.6.600h4v3.800h-4zM2.600 4.400v9.600H5" /></svg></TrayItem>
        <TrayItem $ml={7}><svg width="17" height="14" viewBox="0 0 17 14" fill="none" stroke="#fff" strokeWidth="1.100"><path d="M.6 4.600h2.600L6.500 1.500v11L3.200 9.400H.6zM8.500 4.800q1.500 2.200 0 4.400M11 3q3 4 0 8" /><path d="M13.500 1.300q4.500 5.700 0 11.400" opacity=".8" /></svg></TrayItem>
        <Lang>ESP</Lang>
        <Clock><span>11:57</span><span>21/12/2019</span></Clock>
        <TrayItem $ml={11} $mt={6}>
          <svg width="27" height="27" viewBox="0 0 27 27">
            <path d="M0 0h16v12H7l-4 4v-4H0z" fill="#fff" /><path d="M3 3.500h10M3 6h10M3 8.500h7" stroke="#1b2932" />
            <circle cx="15.500" cy="15.500" r="8.800" fill="#3b454c" stroke="#848b90" strokeWidth="1.200" />
            <Letter x="15.500" y="19.500" $size={11}>18</Letter>
          </svg>
        </TrayItem>
        <ShowDesktop />
      </Tray>
    </TaskbarBox>
  );
}

export default function App() {
  return (
    <Screen>
      <GlobalStyle />
      <Browser>
        <BrowserChrome />
        <Viewport>
          <HospitalPage />
          <Scrollbar>
            <ScrollUp>
              <svg width="8" height="4" viewBox="0 0 8 4"><path d="M4 0l4 4H0z" fill="#a3a3a3" /></svg>
              <Thumb />
            </ScrollUp>
            <ScrollDown><svg width="8" height="4" viewBox="0 0 8 4"><path d="M4 4l4-4H0z" fill="#505050" /></svg></ScrollDown>
          </Scrollbar>
        </Viewport>
      </Browser>
      <Start />
      <Taskbar />
    </Screen>
  );
}
